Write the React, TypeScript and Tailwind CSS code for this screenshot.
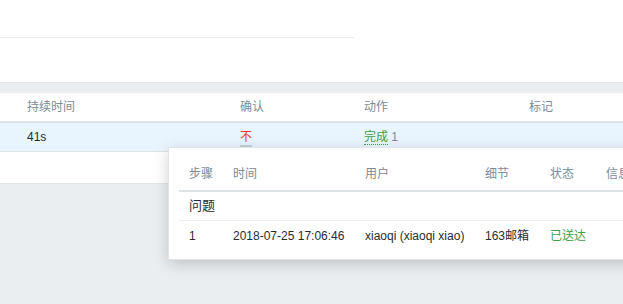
export default function App() {
  const font = { fontFamily: '"Liberation Sans", Arial, "Noto Sans CJK SC", sans-serif' };
  return (
    <div className="relative h-[304px] w-[623px] overflow-hidden bg-[#ebeef0] text-[12px] text-[#1f2c33]" style={font}>
      {/* top panel */}
      <div className="h-[82px] bg-white pt-[37px]">
        <div className="h-px w-[354px] bg-[#ebeef0]" />
      </div>
      <div className="h-[11px] border-t border-[#dfe4e7] bg-[#ebeef0]" />

      {/* problems table */}
      <div className="bg-white">
        <div className="flex h-[30px] items-center border-b-2 border-[#dfe4e7] pl-[27px] text-[#768d99]">
          <div className="w-[213px]">持续时间</div>
          <div className="w-[124px]">确认</div>
          <div className="w-[165px]">动作</div>
          <div>标记</div>
        </div>
        <div className="flex h-[29px] items-center border-b border-[#dfe4e7] bg-[#e8f5ff] pl-[27px]">
          <div className="w-[213px]">41s</div>
          <div className="w-[124px]">
            <span className="border-b-2 border-[#c5d0d6] pb-[1px] text-[#e33734]">不</span>
          </div>
          <div className="w-[165px]">
            <span className="border-b border-dotted border-[#429e47] text-[#429e47]">完成</span>
            <span className="text-[#768d99]"> 1</span>
          </div>
        </div>
        <div className="h-[32px] border-b border-[#dfe4e7]" />
      </div>

      {/* hint box */}
      <div className="absolute left-[168px] top-[147px] h-[113px] w-[480px] border border-[#dfe4e7] bg-white px-[10px] pt-[10px] shadow-[0_4px_14px_rgba(0,0,0,0.18)]">
        <div className="flex h-[34px] items-end whitespace-nowrap border-b-2 border-[#dfe4e7] pb-[7px] pl-[10px] text-[#768d99]">
          <div className="w-[44px] shrink-0">步骤</div>
          <div className="w-[132px] shrink-0">时间</div>
          <div className="w-[120px] shrink-0">用户</div>
          <div className="w-[65px] shrink-0">细节</div>
          <div className="w-[56px] shrink-0">状态</div>
          <div className="shrink-0">信息</div>
        </div>
        <div className="flex h-[29px] items-center border-b border-[#ebeef0] pl-[10px] text-[13px]">问题</div>
        <div className="flex h-[29px] items-center whitespace-nowrap pl-[10px]">
          <div className="w-[44px] shrink-0">1</div>
          <div className="w-[132px] shrink-0">2018-07-25 17:06:46</div>
          <div className="w-[120px] shrink-0">xiaoqi (xiaoqi xiao)</div>
          <div className="w-[65px] shrink-0">163邮箱</div>
          <div className="w-[56px] shrink-0 text-[#429e47]">已送达</div>
        </div>
      </div>
    </div>
  );
}
